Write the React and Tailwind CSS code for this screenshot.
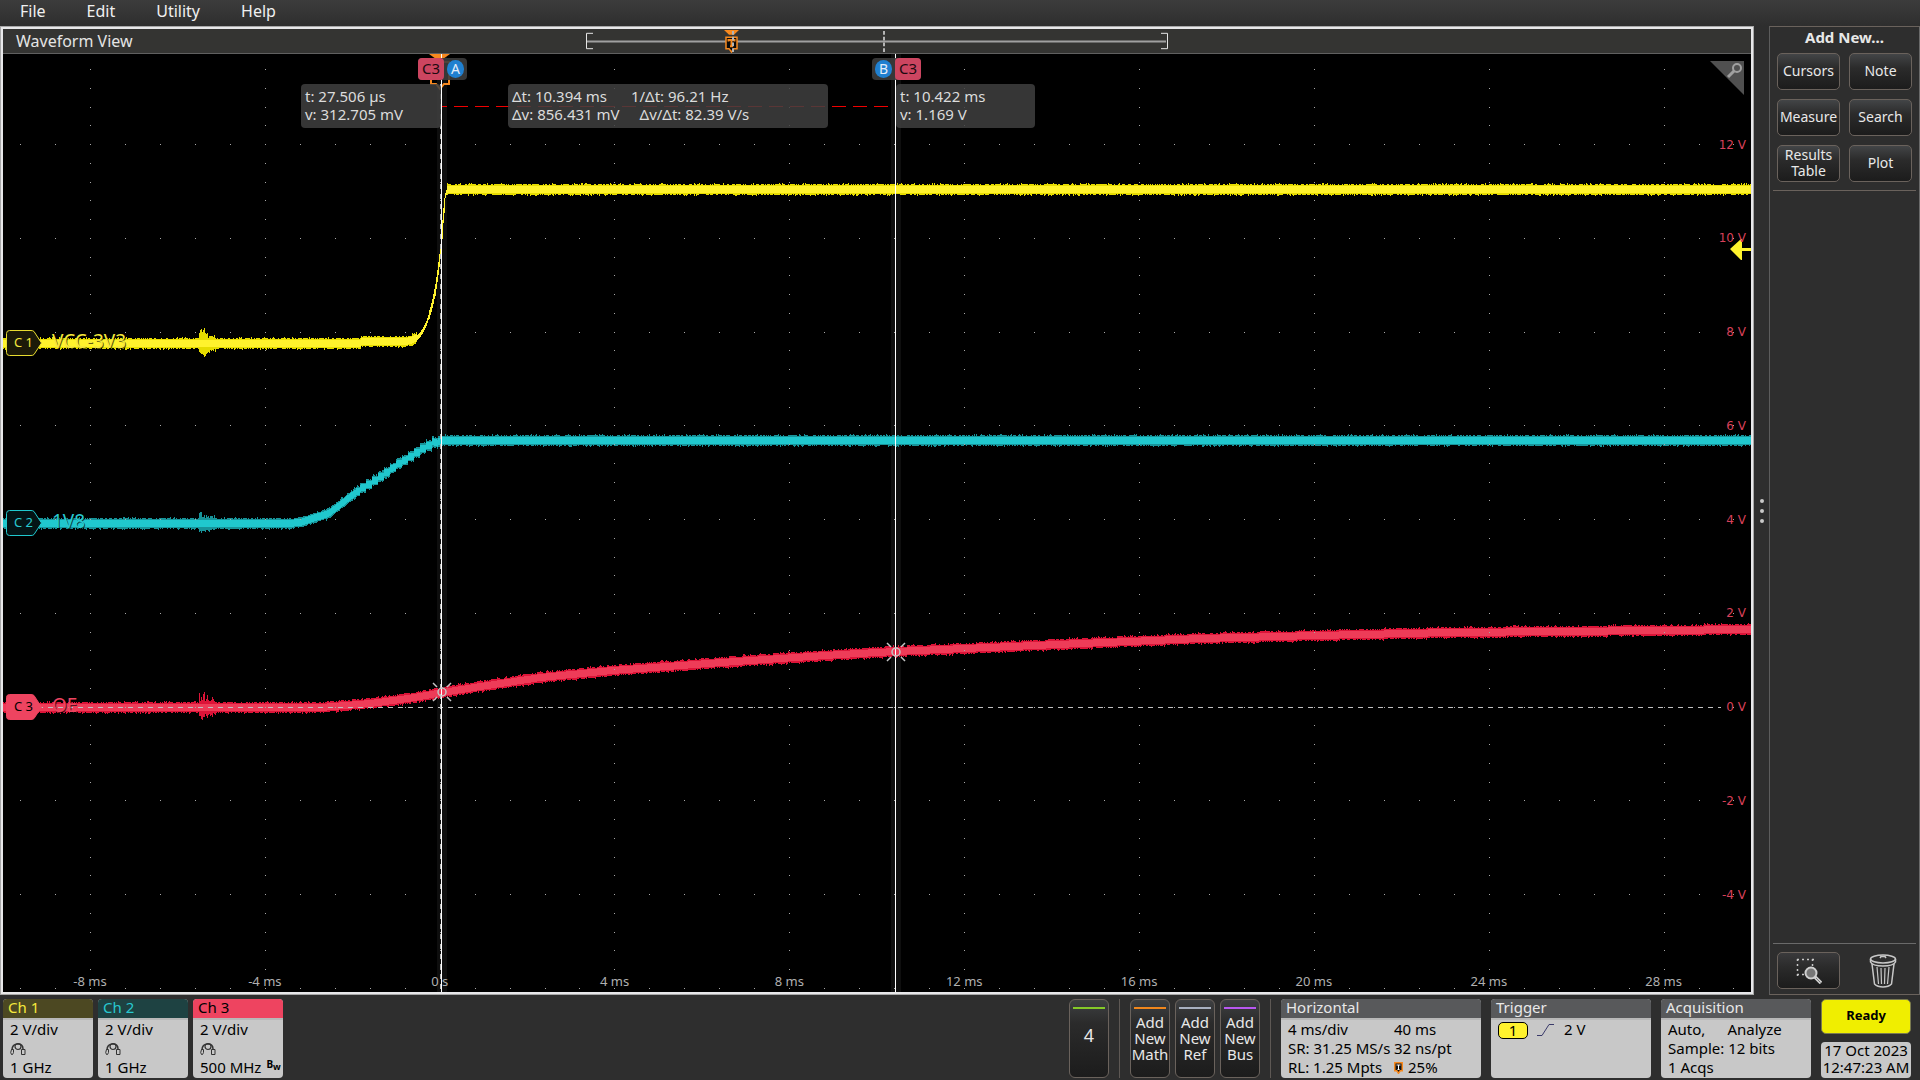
import { useMemo } from "react";

// plot area in graph units
const PLOT = { x: 3, y: 54, w: 1748, h: 938 };

const place = (x, y) => ({
  left: `${((x - PLOT.x) / PLOT.w) * 100}%`,
  top: `${((y - PLOT.y) / PLOT.h) * 100}%`,
});

const TIME_LABELS = ["-8 ms", "-4 ms", "0 s", "4 ms", "8 ms", "12 ms", "16 ms", "20 ms", "24 ms", "28 ms"];
const VOLT_LABELS = ["12 V", "10 V", "8 V", "6 V", "4 V", "2 V", "0 V", "-2 V", "-4 V"];

const TRACES = [
  {
    id: "c1",
    core: "#fff22d",
    edge: "#e6dc00",
    points: [[3, 343], [360, 343], [361, 341], [405, 341], [413, 339], [418, 336], [422, 331], [426, 323], [429, 314], [432, 303], [435, 289], [438, 268], [441, 243], [443, 215], [445, 195], [447, 189], [1751, 189]],
    burst: 11,
    thin: [416, 447],
  },
  {
    id: "c2",
    core: "#20c8ce",
    edge: "#17949a",
    points: [[3, 523], [286, 523], [300, 522], [312, 518], [328, 513], [340, 504], [350, 496], [362, 488], [372, 482], [385, 473], [398, 464], [412, 455], [422, 449], [432, 443], [441, 440], [1751, 440]],
    burst: 7,
    steps: [355, 438],
  },
  {
    id: "c3",
    core: "#ee3c58",
    edge: "#dc1438",
    points: [[3, 707], [320, 707], [345, 705], [370, 703], [400, 699], [420, 696], [442, 692], [480, 686], [540, 677], [612, 670], [735, 661], [840, 654], [895, 651], [1080, 643], [1200, 638], [1316, 635], [1450, 632], [1560, 631], [1751, 629]],
    burst: 11,
  },
];

const random = (seed) => {
  let s = seed;
  return () => {
    s = (s * 1664525 + 1013904223) % 4294967296;
    return s / 4294967296;
  };
};

const valueAt = (points, x) => {
  for (let i = 1; i < points.length; i++) {
    const [x0, y0] = points[i - 1];
    const [x1, y1] = points[i];
    if (x <= x1) return y0 + ((y1 - y0) * (x - x0)) / (x1 - x0);
  }
  return points[points.length - 1][1];
};

// one vertical bar per column, noise at both ends
const buildTrace = ({ points, burst, thin, steps }, seed) => {
  const rnd = random(seed);
  let edge = "";
  let core = "";
  for (let x = 3; x < 1751; x++) {
    let y = valueAt(points, x);
    if (steps && x > steps[0] && x < steps[1]) y += ((x % 6) - 3) * 0.6;
    const next = valueAt(points, x + 1);
    const rise = Math.abs(next - y) > 3 ? Math.abs(next - y) / 2 : 0;
    const isThin = thin && x > thin[0] && x < thin[1];
    const half = isThin ? 2 + rise : 4;
    const noise = () => (isThin ? 0 : rnd() > 0.93 ? 2 : rnd() > 0.45 ? 1 : 0);
    let up = half + noise();
    let down = half + noise();
    if (x >= 199 && x < 216) {
      const k = x < 206 ? 1 : (220 - x) / 20;
      up += (0.1 + 0.9 * rnd()) * burst * k;
      down += (0.1 + 0.6 * rnd()) * burst * k;
    }
    const c = half - (isThin ? 0 : 1);
    edge += `M${x + 0.5} ${Math.round(y - up)}V${Math.round(y + down) + 1}`;
    core += `M${x + 0.5} ${Math.round(y - c)}V${Math.round(y + c) + 1}`;
  }
  return { edge, core };
};

const buildDots = () => {
  let d = "";
  for (let col = -2; col < 48; col++) {
    const x = Math.floor(90.4 + col * 34.97);
    const major = col % 5 === 0;
    for (let row = -4; row <= 45; row++) {
      const y = Math.floor(144.6 + row * 18.75);
      if (y < 56 || y > 990) continue;
      if (major || row % 5 === 0) d += `M${x} ${y}h1v1h-1z`;
    }
  }
  return d;
};

const CursorPoint = ({ x, y }) => (
  <g stroke="#c4c4c4" strokeWidth="1.5" fill="none">
    <circle cx={x} cy={y} r="4" />
    <path d={`M${x - 9} ${y - 9}l4 4M${x + 9} ${y - 9}l-4 4M${x - 9} ${y + 9}l4 -4M${x + 9} ${y + 9}l-4 -4`} />
  </g>
);

const Graph = () => {
  const paths = useMemo(() => TRACES.map((t, i) => buildTrace(t, 7 + i * 31)), []);
  const dots = useMemo(buildDots, []);

  return (
    <svg
      className="absolute inset-0 h-full w-full"
      viewBox={`${PLOT.x} ${PLOT.y} ${PLOT.w} ${PLOT.h}`}
      preserveAspectRatio="none"
      aria-hidden="true"
    >
      <rect x="437" y="54" width="10" height="938" fill="#0e0e0e" />
      <rect x="891" y="54" width="10" height="938" fill="#0e0e0e" />
      {TRACES.map((t, i) => (
        <g key={t.id} fill="none">
          <path d={paths[i].edge} stroke={t.edge} />
          <path d={paths[i].core} stroke={t.core} />
        </g>
      ))}
      <path d={dots} fill="#a8a8a8" />
      <path d="M38 707.5H1721" stroke="#c0c0c0" strokeDasharray="5 5" />
      <path d="M440.5 54V992" stroke="#b8b8b8" strokeDasharray="5 5" />
      <path d="M441 106.5H895" stroke="#f00000" strokeDasharray="14 7" strokeDashoffset="8" />
      {/* trigger position marker */}
      <path d="M429 54h21l-7 5h-7z" fill="#f7891f" />
      <path d="M431 62h18v22h-5l-4 5l-4 -5h-5z" fill="none" stroke="#f7891f" strokeWidth="2" />
      <path d="M441.5 54V992M895.5 54V992" stroke="#ffffff" />
      <CursorPoint x={442} y={692} />
      <CursorPoint x={896} y={652} />
      {/* trigger level arrow */}
      <path d="M1730 249l11 -10h1v9h9v3h-9v9h-1z" fill="#fff22d" />
      <path d="M1710 61h34v34z" fill="#505050" />
      <g stroke="#a0a0a0" fill="none">
        <circle cx="1737" cy="68" r="4" strokeWidth="2" />
        <path d="M1734 71l-6 6" strokeWidth="3" />
      </g>
    </svg>
  );
};

const Handle = ({ y, label, name, fill, stroke, text, nameColor }) => (
  <div className="absolute flex h-[26px] -translate-y-1/2" style={place(6, y)}>
    <svg className="absolute left-0 top-0" width="36" height="26" aria-hidden="true">
      <path d="M3.500 .5H25q2 0 3 1l7.500 11.500l-7.500 11.500q-1 1 -3 1H3.500q-3 0 -3 -3V3.500q0 -3 3 -3z" fill={fill} stroke={stroke} />
    </svg>
    <span className={`relative w-9 pl-2 text-[13px] leading-[24px] ${text}`}>{label}</span>
    <span className={`relative pl-[10px] text-[19px] leading-[22px] [text-shadow:1px_1px_0_#000000a0] ${nameColor}`}>{name}</span>
  </div>
);

const Readout = ({ x, size, children }) => (
  <div
    className={`absolute h-11 rounded-[4px] bg-[#404040]/85 px-1 pt-[3px] text-[15px] leading-[18px] text-[#dcdcdc] ${size}`}
    style={place(x, 84)}
  >
    {children}
  </div>
);

const SourceTag = () => (
  <span className="flex w-[26px] items-center justify-center rounded-[4px] bg-[#cc4560] text-[#1c0a10]">C3</span>
);

const CursorTag = ({ children }) => (
  <span className="mx-[3px] my-auto flex h-[18px] w-[17px] items-center justify-center rounded-full bg-[#2080d0] text-[14px] text-[#e4eefa]">
    {children}
  </span>
);

const TriggerPin = () => (
  <svg width="9" height="12" viewBox="0 0 9 12" aria-hidden="true">
    <path d="M.75 .75h7.500v8h-2l-1.750 2.500l-1.750 -2.500h-2z" fill="#111" stroke="#f7891f" strokeWidth="1.500" />
    <path d="M2.500 3h4M4.500 3v4.500M3.500 7.500h2" fill="none" stroke="#fff" />
  </svg>
);

const Navigator = () => (
  <svg className="absolute inset-0 h-full w-full" viewBox="3 29 1748 25" preserveAspectRatio="none" aria-hidden="true">
    <path d="M587 42H1166" stroke="#a0a0a0" strokeWidth="2" />
    <path d="M593 33.500H586.500V49.500H593M1161 33.500H1167.500V49.500H1161" fill="none" stroke="#e8e8e8" />
    <path d="M724 30h15l-5 5h-5z" fill="#f7891f" />
    <path d="M726 37.500h11v12h-3l-2.500 3.500l-2.500 -3.500h-3z" fill="#0a0a0a" stroke="#f7891f" strokeWidth="1.500" />
    <path d="M728.500 42v-1.500h6v1.500M731.500 40v7M730 47h3" stroke="#f7891f" strokeWidth="2" fill="none" />
    <path d="M733 31V53M884 31V53" stroke="#b4b4b4" strokeWidth="2" strokeDasharray="4 2" />
  </svg>
);

const SideButton = ({ children }) => (
  <button className="flex h-[37px] w-[63px] items-center justify-center rounded-[5px] border border-[#6a625c] bg-linear-to-b from-[#434547] via-[#2b2b2b] via-40% to-[#1c1c1c] pb-[2px] text-center text-[14px] leading-4 text-[#e8e8e8]">
    {children}
  </button>
);

const SidePanel = () => (
  <aside className="flex w-[151px] flex-col border border-b-[#6a625c] border-l-[#5c5c5c] border-r-[#6a6a6a] border-t-[#6a625c] px-[3px]">
    <h2 className="pt-px text-center text-[15px] font-bold leading-[18px] text-[#e8e8e8]">Add New...</h2>
    <div className="mx-1 mt-[7px] grid grid-cols-[63px_63px] gap-x-[9px] gap-y-[9px]">
      <SideButton>Cursors</SideButton>
      <SideButton>Note</SideButton>
      <SideButton>Measure</SideButton>
      <SideButton>Search</SideButton>
      <SideButton>Results<br />Table</SideButton>
      <SideButton>Plot</SideButton>
    </div>
    <hr className="mt-2 border-[#6a625c]" />
    <div className="mt-auto flex border-t border-[#6a6a6a] px-1 pb-[5px] pt-2">
      <button aria-label="Zoom area" className="flex h-[37px] w-[63px] items-center justify-center rounded-[5px] border border-[#6a625c] bg-linear-to-b from-[#3a3a3c] via-[#2b2b2b] via-40% to-[#1c1c1c]">
        <svg width="26" height="26" viewBox="0 0 26 26" fill="none" aria-hidden="true">
          <path d="M1 1.500H18M1.500 1V18M16.500 1V9M1 16.500H9" stroke="#c8c8c8" strokeWidth="1.500" strokeDasharray="2 3" />
          <circle cx="15" cy="15" r="5.500" fill="#777" stroke="#d0d0d0" strokeWidth="2" />
          <path d="M19 19l6 6" stroke="#d0d0d0" strokeWidth="3.500" />
          <path d="M20 20l4.500 4.500" stroke="#777" />
        </svg>
      </button>
      <button aria-label="Delete" className="ml-[29px] flex h-[37px] w-7 items-center justify-center">
        <svg width="28" height="34" viewBox="0 0 28 34" fill="none" stroke="#c8c8c8" strokeWidth="1.500" aria-hidden="true">
          <ellipse cx="14" cy="5" rx="12.500" ry="4" />
          <path d="M1.500 5v3q2 4 12.500 4t12.500 -4V5M11 4l1 -1.500h4l1 1.500" />
          <path d="M3 10l2.500 20q3 3 8.500 3t8.500 -3L25 10" />
          <path d="M8 13l1.500 17M12 14l.5 16M16 14l-.5 16M20 13l-1.500 17" strokeWidth="1.200" />
        </svg>
      </button>
    </div>
  </aside>
);

const ProbeIcon = () => (
  <svg width="16" height="14" viewBox="0 0 16 14" fill="none" stroke="#333" aria-hidden="true">
    <path d="M2 8q0 -6 6 -6q5 0 5 5" strokeWidth="1.500" />
    <circle cx="8" cy="4.500" r="3" strokeWidth="1.200" />
    <path d="M1.500 7.500h2v3l-1 2h-1l-.8 -2zM11.500 7.500h3.500v5h-3.500z" />
  </svg>
);

const ChannelCard = ({ title, header, bandwidth, limited }) => (
  <section className="h-[79px] w-[90px] rounded-[4px] bg-[#c8c8c8] text-[15px] leading-[19px] text-black">
    <h3 className={`h-[19px] rounded-t-[4px] pl-[5px] leading-[16px] ${header}`}>{title}</h3>
    <div className="border-t-2 border-[#b8b8b8] pl-[7px]">
      <p>2 V/div</p>
      <div className="flex h-[19px] items-center"><ProbeIcon /></div>
      <p>
        {bandwidth}
        {limited && (
          <span className="relative -top-[5px] ml-[5px] text-[10px] font-bold leading-none">B<sub className="text-[9px]">w</sub></span>
        )}
      </p>
    </div>
  </section>
);

const InfoCard = ({ title, width, children }) => (
  <section className={`h-[79px] rounded-[4px] bg-[#c8c8c8] text-[15px] leading-[19px] text-black ${width}`}>
    <h3 className="h-[19px] rounded-t-[4px] bg-[#58595b] pl-[5px] leading-[16px] text-[#e8e8e8]">{title}</h3>
    <div className="border-t-2 border-[#b8b8b8] px-[7px]">{children}</div>
  </section>
);

const BarButton = ({ bar, text, children }) => (
  <button className={`flex h-[79px] w-10 flex-col items-center rounded-[6px] border border-[#6a625c] bg-linear-to-b from-[#3e4042] via-[#2b2b2b] via-30% to-[#1c1c1c] pt-[7px] text-[#e8e8e8] ${text}`}>
    <span className={`h-[2px] w-8 shrink-0 ${bar}`} />
    <span className="flex flex-1 items-center text-center">{children}</span>
  </button>
);

const Footer = () => (
  <footer className="flex h-[85px] items-start px-[3px] pt-1">
    <div className="flex gap-[5px]">
      <ChannelCard title="Ch 1" header="bg-[#4c4822] text-[#f4e83c]" bandwidth="1 GHz" />
      <ChannelCard title="Ch 2" header="bg-[#1e4242] text-[#28c8d0]" bandwidth="1 GHz" />
      <ChannelCard title="Ch 3" header="bg-[#ee4460] text-black" bandwidth="500 MHz" limited />
    </div>
    <div className="ml-auto mr-[5px] flex gap-[5px]">
      <BarButton bar="bg-[#84c828]" text="pb-4 text-[18px]">4</BarButton>
      <div className="mx-[5px] h-[79px] w-px bg-[#5e5854]" />
      <BarButton bar="bg-[#f0861c]" text="pb-[10px] text-[15px] leading-4">Add<br />New<br />Math</BarButton>
      <BarButton bar="bg-[#a8b0c0]" text="pb-[10px] text-[15px] leading-4">Add<br />New<br />Ref</BarButton>
      <BarButton bar="bg-[#b858f0]" text="pb-[10px] text-[15px] leading-4">Add<br />New<br />Bus</BarButton>
      <div className="mx-[5px] h-[79px] w-px bg-[#5e5854]" />
    </div>
    <div className="flex gap-[10px] pr-[6px]">
      <InfoCard title="Horizontal" width="w-[200px]">
        <div className="grid grid-cols-[106px_1fr] whitespace-nowrap">
          <span>4 ms/div</span>
          <span>40 ms</span>
          <span>SR: 31.25 MS/s</span>
          <span>32 ns/pt</span>
          <span>RL: 1.25 Mpts</span>
          <span className="flex items-center gap-[5px]"><TriggerPin />25%</span>
        </div>
      </InfoCard>
      <InfoCard title="Trigger" width="w-[160px]">
        <div className="flex items-center">
          <span className="mt-[2px] flex h-[17px] w-[30px] items-center justify-center rounded-[5px] border border-black bg-[#fff22d] pb-px">1</span>
          <svg className="ml-[9px] mr-[10px]" width="17" height="12" fill="none" stroke="#3a3a6a" aria-hidden="true">
            <path d="M0 11.500h5L12 .5h5" />
          </svg>
          <span>2 V</span>
        </div>
      </InfoCard>
      <InfoCard title="Acquisition" width="w-[150px]">
        <p className="flex gap-[22px]"><span>Auto,</span><span>Analyze</span></p>
        <p>Sample: 12 bits</p>
        <p>1 Acqs</p>
      </InfoCard>
      <div className="w-[90px] text-center">
        <button className="block h-[35px] w-full rounded-[5px] border border-[#7a7a50] bg-[#f0ee00] pb-[2px] text-[13px] font-bold text-black">Ready</button>
        <p className="mt-2 h-9 whitespace-nowrap rounded-[4px] bg-[#c8c8c8] text-[15px] leading-[17px] text-black">17 Oct 2023<br />12:47:23 AM</p>
      </div>
    </div>
  </footer>
);

const WaveformView = () => (
  <main className="flex flex-1 flex-col border border-[#a8a8a8]">
    <div className="flex flex-1 flex-col border-2 border-[#e8e8ea]">
      <div className="relative h-[25px] border-b border-[#606060] bg-[#343432]">
        <h1 className="pl-[13px] text-[16px] leading-[24px] text-[#e4e4e4]">Waveform View</h1>
        <Navigator />
      </div>
      <div className="relative flex-1 overflow-hidden bg-black">
        <Graph />
        {TIME_LABELS.map((label, i) => (
          <span key={label} className="absolute -translate-x-1/2 -translate-y-1/2 text-[13px] leading-none text-[#b0b0b0]" style={place(90 + i * 174.85, 981)}>
            {label}
          </span>
        ))}
        {VOLT_LABELS.map((label, i) => (
          <span key={label} className="absolute right-[5px] -translate-y-1/2 font-['DejaVu_Sans'] text-[12px] leading-none text-[#d8405a]" style={{ top: place(0, 144.5 + i * 93.75).top }}>
            {label}
          </span>
        ))}
        <Handle y={343} label="C 1" name="VCC-3V3" fill="#1c1a08" stroke="#e8dc30" text="text-[#f4e83c]" nameColor="text-[#f4e83c]" />
        <Handle y={523} label="C 2" name="1V8" fill="#041416" stroke="#20c8ce" text="text-[#28c8d0]" nameColor="text-[#28c8d0]" />
        <Handle y={707} label="C 3" name="OE" fill="#ee4460" stroke="#ee4460" text="text-black" nameColor="text-[#ee4460]" />
        <Readout x={301} size="w-[140px]">
          <p>t: 27.506 µs</p>
          <p>v: 312.705 mV</p>
        </Readout>
        <Readout x={508} size="w-[320px]">
          <p className="flex gap-6"><span>Δt: 10.394 ms</span><span>1/Δt: 96.21 Hz</span></p>
          <p className="flex gap-5"><span>Δv: 856.431 mV</span><span>Δv/Δt: 82.39 V/s</span></p>
        </Readout>
        <Readout x={896} size="w-[139px]">
          <p>t: 10.422 ms</p>
          <p>v: 1.169 V</p>
        </Readout>
        <div className="absolute flex h-[22px] rounded-[4px] bg-[#3c3c3c]/90 text-[15px] leading-none" style={place(418, 58)}>
          <SourceTag />
          <CursorTag>A</CursorTag>
        </div>
        <div className="absolute flex h-[22px] rounded-[4px] bg-[#3c3c3c]/90 text-[15px] leading-none" style={place(872, 58)}>
          <CursorTag>B</CursorTag>
          <SourceTag />
        </div>
      </div>
    </div>
  </main>
);

export default function App() {
  return (
    <div className="flex min-h-screen flex-col bg-[#2e2e2e] font-['Noto_Sans',sans-serif]">
      <nav className="flex h-[26px] items-start gap-[41px] bg-linear-to-b from-[#3c3c3c] to-[#2e2e2e] pl-5 text-[16px] leading-[23px] text-[#f0f0f0]">
        <button>File</button>
        <button>Edit</button>
        <button>Utility</button>
        <button>Help</button>
      </nav>
      <div className="flex flex-1">
        <WaveformView />
        <div className="flex w-[15px] flex-col items-center justify-center gap-[6px]">
          <span className="size-1 rounded-full bg-[#c8c8c8]" />
          <span className="size-1 rounded-full bg-[#c8c8c8]" />
          <span className="size-1 rounded-full bg-[#c8c8c8]" />
        </div>
        <SidePanel />
      </div>
      <Footer />
    </div>
  );
}
